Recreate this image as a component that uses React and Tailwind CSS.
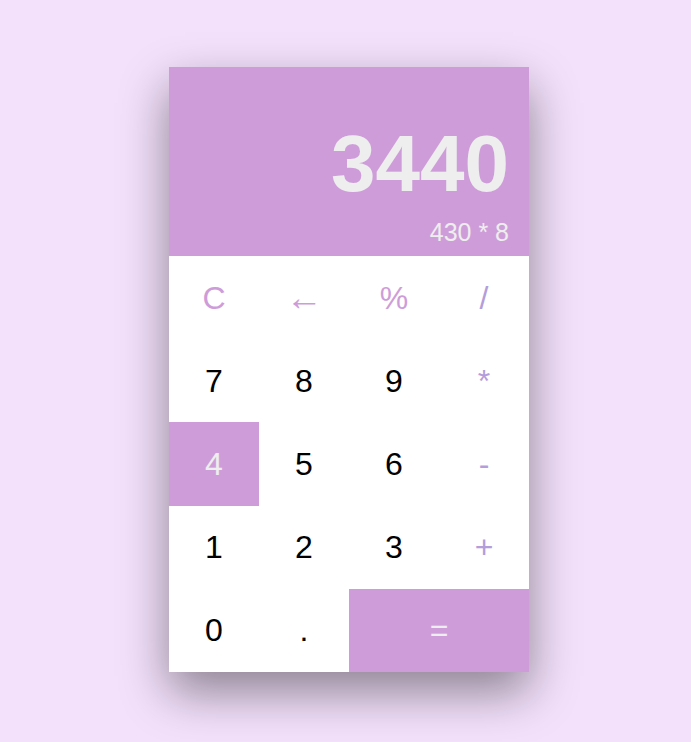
import React from "react";

const btn = "flex items-center justify-center text-[32px] leading-none";

export default function App() {
  return (
    <div
      className="min-h-screen w-full bg-[#f3e0fb] flex justify-center pl-[7px] pt-[67px]"
      style={{ fontFamily: '"Liberation Sans", Arial, sans-serif' }}
    >
      <div className="w-[360px] h-[605px] flex flex-col bg-white shadow-[0_20px_45px_rgba(0,0,0,0.42)]">
        <div className="h-[189px] bg-[#ce9dd9] flex flex-col justify-end items-end px-5 pb-[5px]">
          <div className="text-[80px] font-bold leading-none text-[#eeeeee]">3440</div>
          <div className="mt-[10px] text-[25px] leading-normal text-[#eeeeee]">430 * 8</div>
        </div>
        <div className="grid grid-cols-4 grid-rows-5 h-[416px]">
          <div className={`${btn} text-[#ce9dd9]`}>C</div>
          <div className={`${btn} text-[#ce9dd9]`}><span className="text-[37px]">←</span></div>
          <div className={`${btn} text-[#ce9dd9]`}>%</div>
          <div className={`${btn} text-[#b39ddb]`}>/</div>

          <div className={`${btn} text-black`}>7</div>
          <div className={`${btn} text-black`}>8</div>
          <div className={`${btn} text-black`}>9</div>
          <div className={`${btn} text-[#b39ddb]`}>*</div>

          <div className={`${btn} bg-[#ce9dd9] text-[#eeeeee]`}>4</div>
          <div className={`${btn} text-black`}>5</div>
          <div className={`${btn} text-black`}>6</div>
          <div className={`${btn} text-[#b39ddb]`}>-</div>

          <div className={`${btn} text-black`}>1</div>
          <div className={`${btn} text-black`}>2</div>
          <div className={`${btn} text-black`}>3</div>
          <div className={`${btn} text-[#b39ddb]`}>+</div>

          <div className={`${btn} text-black`}>0</div>
          <div className={`${btn} text-black`}>.</div>
          <div className={`${btn} col-span-2 bg-[#ce9dd9] text-[#eeeeee]`}>=</div>
        </div>
      </div>
    </div>
  );
}
